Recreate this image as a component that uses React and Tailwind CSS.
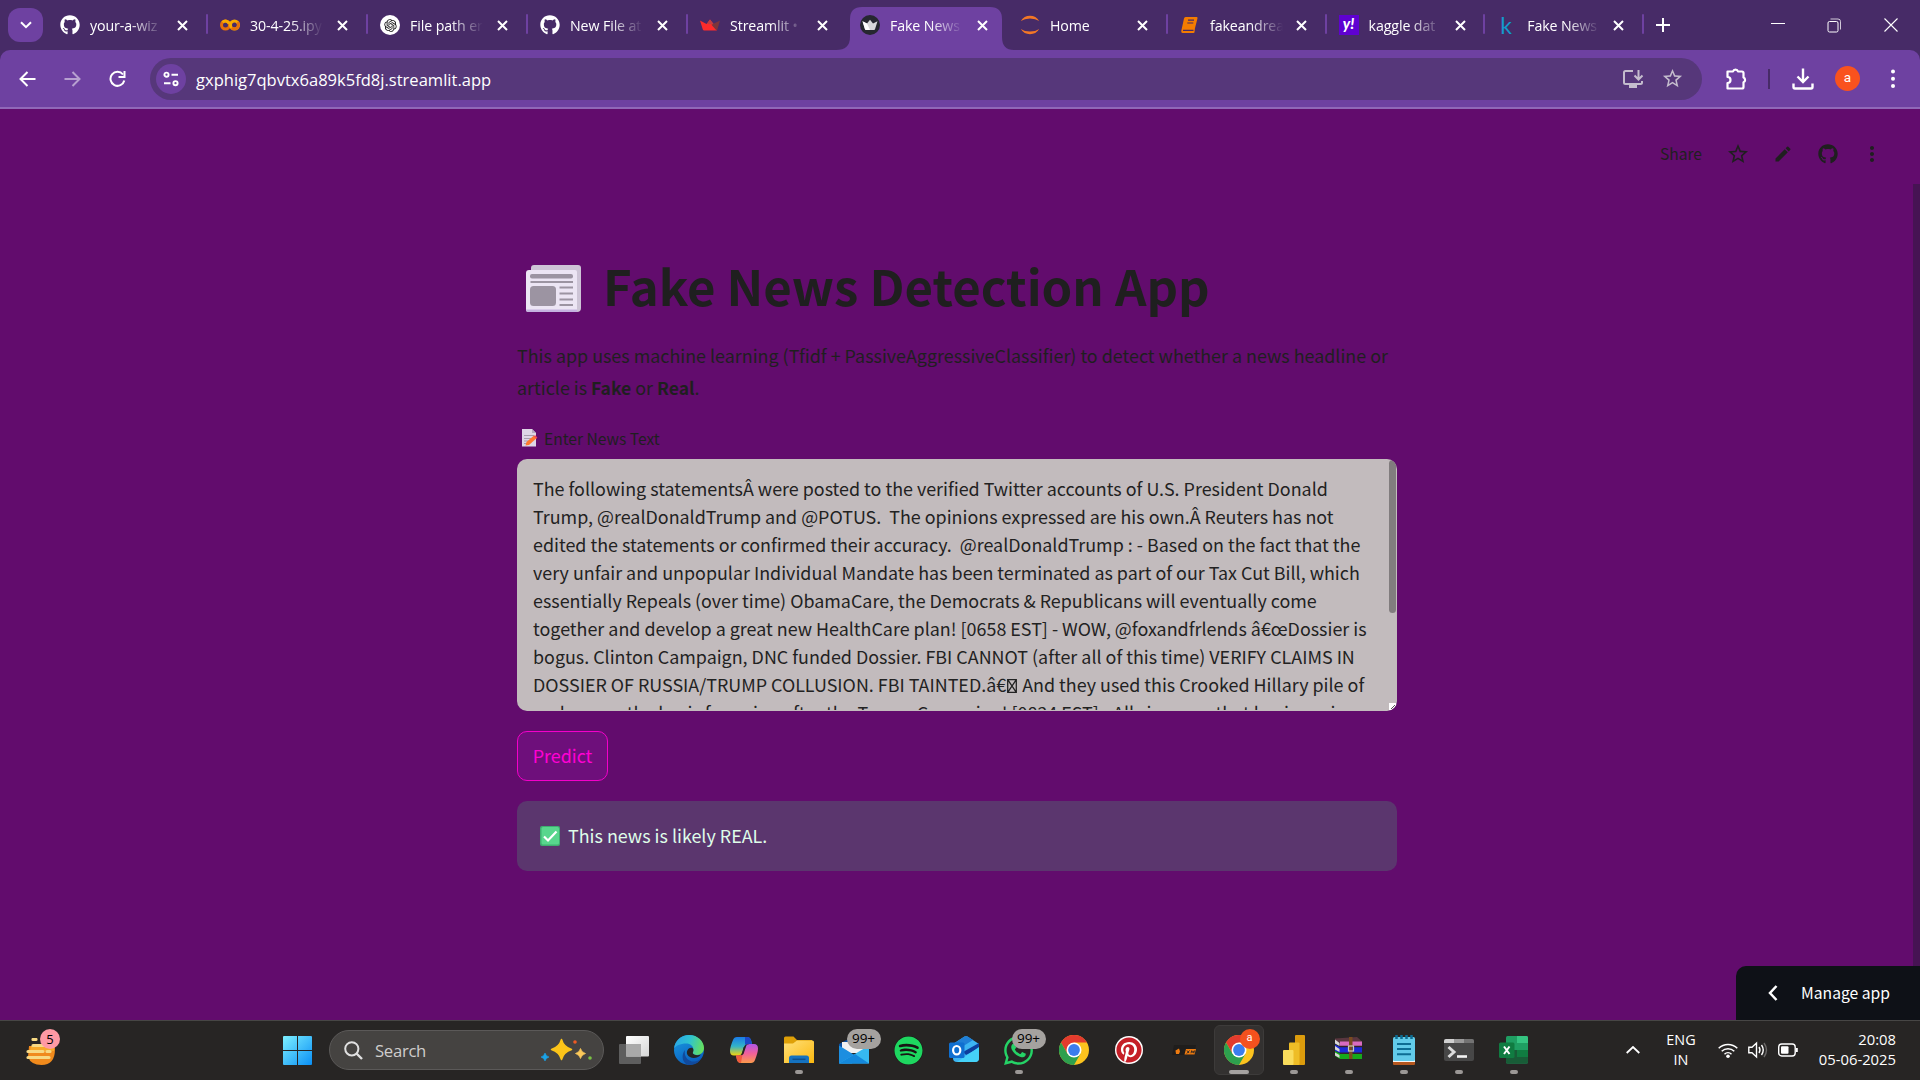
import React from "react";
import { FaGithub, FaWhatsapp, FaPinterest, FaSpotify } from "react-icons/fa";
import { RiOpenaiFill } from "react-icons/ri";
import { MdEdit, MdMoreVert, MdStarOutline } from "react-icons/md";

const GithubTab = () => <FaGithub size={20} color="#fff" />;

const ColabTab = () => (
  <svg width="20" height="20" viewBox="0 0 20 20" fill="none">
    <circle cx="5.5" cy="10" r="4" stroke="#e8710a" strokeWidth="3" />
    <path d="M2.6 7.2a4 4 0 0 1 6.6 1.6" stroke="#f9ab00" strokeWidth="3" />
    <circle cx="14.5" cy="10" r="4" stroke="#f9ab00" strokeWidth="3" />
    <path d="M17.4 7.2a4 4 0 0 1-5.7 5.6" stroke="#e8710a" strokeWidth="3" />
  </svg>
);

const GptTab = () => (
  <span className="flex h-5 w-5 items-center justify-center rounded-full bg-white">
    <RiOpenaiFill size={15} color="#111" />
  </span>
);

const StreamlitTab = () => (
  <svg width="20" height="20" viewBox="0 0 20 20">
    <path d="M0 5.5 6.5 9 10 4.5 13.5 9 17 15.5H4.2Q3.2 15.5 2.8 14.6Z" fill="#ff2b2b" />
    <path d="M10 4.5 13.7 9.3 7 9z" fill="#bd4043" />
    <path d="M20 5.5 11.5 9.8l5 5.6q.7-.2.9-.9z" fill="#7d353b" />
  </svg>
);

const CrownTab = () => (
  <span className="flex h-5 w-5 items-center justify-center rounded-full bg-[#262730]">
    <svg width="16" height="12" viewBox="0 0 16 12">
      <path d="M.5 2.2 5 4.6 8 .8l3 3.8 4.500-2.400L13 10.300q-.2.700-1 .700H4q-.8 0-1-.700z" fill="#d8d8da" />
      <path d="M5 4.600 8 11H4q-.8 0-1-.700L.500 2.200z" fill="#fff" />
    </svg>
  </span>
);

const JupyterTab = () => (
  <svg width="20" height="20" viewBox="0 0 20 20" fill="#f37726">
    <path d="M.8 6Q4 .8 10 .8T19.200 6Q15.500 3.500 10 3.500T.8 6z" />
    <path d="M.8 14Q4 19.200 10 19.200T19.200 14Q15.500 16.500 10 16.500T.8 14z" />
  </svg>
);

const BookTab = () => (
  <svg width="20" height="20" viewBox="0 0 20 20">
    <path d="M5.500 2h11q1.300 0 1 1.300l-2.600 10.200-.4 3.700q-.1.800-1 .800H2.600Q1 18 1.200 16.200L4 3.500Q4.300 2 5.500 2z" fill="#f57c00" />
    <path d="M8 5.200h6M7.300 8h6M3 15.400h10.500" stroke="#472b67" strokeWidth="1.200" />
  </svg>
);

const YahooTab = () => (
  <span className="flex h-5 w-5 items-center justify-center bg-[#5f01d1] pb-[3px] font-['Lato'] text-[15px] font-black italic leading-none text-white">y!</span>
);

const KaggleTab = () => (
  <span className="flex h-5 w-5 items-center justify-center pr-[2px] font-['Lato'] text-[23px] leading-none text-[#1398cc]">k</span>
);

const TABS = [
  { title: "your-a-wiz", Icon: GithubTab, sep: true },
  { title: "30-4-25.ipy", Icon: ColabTab, sep: true },
  { title: "File path er", Icon: GptTab, sep: true },
  { title: "New File at", Icon: GithubTab, sep: true },
  { title: "Streamlit •", Icon: StreamlitTab },
  { title: "Fake News", Icon: CrownTab, active: true },
  { title: "Home", Icon: JupyterTab, sep: true },
  { title: "fakeandrea", Icon: BookTab, sep: true, narrow: true },
  { title: "kaggle dat", Icon: YahooTab, sep: true, narrow: true },
  { title: "Fake News", Icon: KaggleTab, sep: true, narrow: true },
];

const Cross = () => (
  <svg className="shrink-0" width="11" height="11" viewBox="0 0 11 11" stroke="#fff" strokeWidth="2">
    <path d="m1 1 9 9M10 1l-9 9" />
  </svg>
);

function Tab({ tab }) {
  const { Icon } = tab;
  return (
    <div className={"relative flex h-[50px] shrink-0 items-start pl-[12px] " + (tab.narrow ? "w-[158.600px]" : "w-[160px]")}>
      {tab.active && (
        <svg className="absolute -left-[12px] top-[7px]" width="178" height="43" viewBox="0 0 178 43">
          <path d="M0 43Q14 43 14 30V12Q14 0 26 0H154Q166 0 166 12V30Q166 43 178 43Z" fill="#6e41a1" />
        </svg>
      )}
      <div className="relative flex h-[50px] w-full items-center">
        <span className="flex h-5 w-5 shrink-0 items-center">
          <Icon />
        </span>
        <span className="ml-[10px] mt-[1px] w-[73px] shrink-0 whitespace-nowrap text-[14.200px] leading-5 tracking-[-0.100px] text-white [mask-image:linear-gradient(90deg,#000_55%,transparent)]">
          {tab.title}
        </span>
        <span className={"flex " + (tab.narrow ? "ml-[13px]" : "ml-[14px]")}>
          <Cross />
        </span>
        {tab.sep && <span className="absolute right-0 top-[14px] h-5 w-[2px] rounded bg-[#6e41a1]" />}
      </div>
    </div>
  );
}

function TabStrip() {
  return (
    <div className="flex h-[50px] items-center bg-[#472b67]">
      <button className="ml-2 flex h-[34px] w-[35px] shrink-0 items-center justify-center rounded-[12px] bg-[#6e41a1]">
        <svg width="12" height="8" viewBox="0 0 12 8" fill="none" stroke="#fff" strokeWidth="2">
          <path d="m1 1.200 5 5 5-5" />
        </svg>
      </button>
      <div className="ml-[5px] flex">
        {TABS.map((t, i) => (
          <Tab key={i} tab={t} />
        ))}
      </div>
      <svg className="ml-[12px]" width="14" height="14" viewBox="0 0 14 14" stroke="#fff" strokeWidth="2">
        <path d="M7 0v14M0 7h14" />
      </svg>
      <div className="ml-auto mr-[22px] flex items-center gap-[42px]">
        <svg width="14" height="14" viewBox="0 0 14 14" stroke="#fff">
          <path d="M0 5.500h14" />
        </svg>
        <svg width="15" height="15" viewBox="0 0 15 15" stroke="#fff" fill="none">
          <rect x="1" y="3.500" width="10" height="10.500" rx="1.500" />
          <path d="M3.500 1h7.500q2.500 0 2.500 2.500v8" strokeOpacity=".75" />
        </svg>
        <svg width="14" height="14" viewBox="0 0 14 14" stroke="#fff" strokeWidth="1.100">
          <path d="m.5.500 13 13M13.500.500l-13 13" />
        </svg>
      </div>
    </div>
  );
}

function Toolbar() {
  return (
    <div className="bg-[#472b67]">
      <div className="flex h-[59px] items-center rounded-t-[10px] border-b-2 border-[#9068b8] bg-[#6e41a1]">
        <svg className="ml-[19px]" width="17" height="16" viewBox="0 0 17 16" fill="none" stroke="#fff" strokeWidth="2">
          <path d="M16.500 8H1.500M8.500 1l-7 7 7 7" />
        </svg>
        <svg className="ml-[28px] opacity-50" width="17" height="16" viewBox="0 0 17 16" fill="none" stroke="#fff" strokeWidth="2">
          <path d="M.5 8h15M8.500 1l7 7-7 7" />
        </svg>
        <svg className="ml-[28px]" width="18" height="18" viewBox="0 0 18 18" fill="none" stroke="#fff" strokeWidth="2">
          <path d="M15.300 10.500A7 7 0 1 1 14 4.500" />
          <path d="M15.500 1v6h-6" />
        </svg>
        <div className="ml-[23px] flex h-[42px] w-[1552px] items-center rounded-full bg-[#56377a]">
          <span className="ml-[6px] flex h-[30px] w-[30px] items-center justify-center rounded-full bg-[#6e41a1]">
            <svg width="16" height="16" viewBox="0 0 16 16" fill="none" stroke="#fff" strokeWidth="1.900">
              <circle cx="3.500" cy="3.700" r="2.100" />
              <path d="M8.500 3.700H15M1 12.200h6.500" />
              <circle cx="12.500" cy="12.200" r="2.100" />
            </svg>
          </span>
          <span className="ml-[10px] mt-[2px] text-[16.540px] leading-6 text-white">gxphig7qbvtx6a89k5fd8j.streamlit.app</span>
          <svg className="ml-auto" width="22" height="20" viewBox="0 0 22 20" fill="none" stroke="#c4bccd" strokeWidth="2">
            <path d="M11 2H3.500Q2 2 2 3.500v10Q2 15 3.500 15h15q1.500 0 1.500-1.500V12M16.500 1v9M12.500 6.500l4 4 4-4" />
            <path d="M7 17.500h8" strokeWidth="3" />
          </svg>
          <MdStarOutline className="ml-[17px] mr-[18px]" size={23} color="#c4bccd" />
        </div>
        <svg className="ml-[22px]" width="24" height="24" viewBox="0 0 24 24" fill="none" stroke="#fff" strokeWidth="2.200" strokeLinejoin="round">
          <path d="M3.500 4.500H9a2.600 2.600 0 0 1 5 0h4q1.500 0 1.500 1.500v4.500a2.600 2.600 0 0 1 0 4.800V20q0 1.500-1.500 1.500H3.500v-5.500a3 3 0 0 0 0-6z" />
        </svg>
        <span className="ml-[20px] h-5 w-[2px] bg-[#472b67]" />
        <svg className="ml-[22px]" width="22" height="22" viewBox="0 0 22 22" fill="none" stroke="#fff" strokeWidth="2.400">
          <path d="M11 .5v13M5.500 8.500 11 14l5.500-5.500M1.500 15.500v3.500q0 1.500 1.500 1.500h16q1.500 0 1.500-1.500v-3.500" />
        </svg>
        <span className="ml-[21px] flex h-[25px] w-[25px] items-center justify-center rounded-full bg-[#f9521e] pb-[2px] font-['Roboto'] text-[13.500px] text-white">a</span>
        <svg className="ml-[30px]" width="6" height="20" viewBox="0 0 6 20" fill="#fff">
          <circle cx="3" cy="2.500" r="2" />
          <circle cx="3" cy="9.800" r="2" />
          <circle cx="3" cy="17" r="2" />
        </svg>
      </div>
    </div>
  );
}

const NewspaperEmoji = () => (
  <svg className="mt-[7px]" width="56" height="48" viewBox="0 0 56 48">
    <path d="M8 0h44q3 0 3 3v40q0 4-4 4H8Q5 47 5 44V3Q5 0 8 0z" fill="#cdc4d6" />
    <path d="M3 5h46q2 0 2 2v40H2.500Q0 47 0 44.500V8Q0 5 3 5z" fill="#ece5f4" />
    <path d="M0 44.500h51V47H2.500Q0 47 0 44.500z" fill="#c4b3e0" />
    <rect x="4" y="9" width="43" height="4.500" rx="2" fill="#9c94a2" />
    <rect x="4" y="21" width="26" height="20" rx="3.500" fill="#9c94a2" />
    <path d="M4.500 17H47M33.500 22.500H47M33.500 28.500H47M33.500 34.500H47M33.500 40H47" stroke="#9c94a2" strokeWidth="2" />
  </svg>
);

const MemoEmoji = () => (
  <svg width="16" height="18" viewBox="0 0 16 18">
    <path d="M0 0h10l4 4v13.500H0z" fill="#ded6e6" />
    <path d="M10 0v4h4z" fill="#b4aabf" />
    <path d="M2 6.500h10M2 9.500h7M2 12h5M2 14.500h3" stroke="#a69dad" />
    <path d="m3.500 16.500 1-3.500 7.500-6.500 2.500 2.800L7 16z" fill="#ff7a2e" />
    <path d="m11.500 7 1.800-.8 2 2.300-.8 1.300z" fill="#f04a58" />
  </svg>
);

const CheckEmoji = () => (
  <svg width="20" height="20" viewBox="0 0 20 20">
    <rect width="20" height="20" rx="2" fill="#3fae70" />
    <rect x="1.500" y="1" width="17.500" height="17.500" rx="1.500" fill="#58d68d" />
    <path d="m4 10.500 4 4 8.500-9" fill="none" stroke="#fff" strokeWidth="2.200" />
  </svg>
);

const Tofu = () => (
  <svg className="inline-block align-[-1px]" width="12" height="14" viewBox="0 0 12 14" fill="none" stroke="#222" strokeWidth="1.300">
    <path d="M1.700.700h8.600v12.600H1.700zM1.700.700l8.600 12.600M10.300.700 1.700 13.300" />
  </svg>
);

const LINES = [
  "The following statementsÂ were posted to the verified Twitter accounts of U.S. President Donald",
  "Trump, @realDonaldTrump and @POTUS.  The opinions expressed are his own.Â Reuters has not",
  "edited the statements or confirmed their accuracy.  @realDonaldTrump : - Based on the fact that the",
  "very unfair and unpopular Individual Mandate has been terminated as part of our Tax Cut Bill, which",
  "essentially Repeals (over time) ObamaCare, the Democrats & Republicans will eventually come",
  "together and develop a great new HealthCare plan! [0658 EST] - WOW, @foxandfrlends â€œDossier is",
  "bogus. Clinton Campaign, DNC funded Dossier. FBI CANNOT (after all of this time) VERIFY CLAIMS IN",
  <>DOSSIER OF RUSSIA/TRUMP COLLUSION. FBI TAINTED.â€<Tofu /> And they used this Crooked Hillary pile of</>,
  "garbage as the basis for going after the Trump Campaign! [0824 EST] - All signs are that business is",
];

function AppPage() {
  return (
    <main className="relative flex h-[911px] flex-col items-center bg-[#620c6d] pr-[6px] font-['Noto_Sans_CJK_SC',sans-serif] text-[#1f1f1f]">
      <header className="flex h-[90px] w-full items-center justify-end pr-[30px]">
        <span className="text-[15.600px] leading-none">Share</span>
        <MdStarOutline className="ml-[24px] mr-[1px]" size={24} />
        <MdEdit className="ml-[22px]" size={20} />
        <FaGithub className="ml-[25px]" size={20} />
        <MdMoreVert className="ml-[22px]" size={24} />
      </header>

      <div className="flex w-[880px] flex-col items-start">
        <h1 className="mt-[53px] flex h-[66px] items-center whitespace-nowrap pl-[9px] text-[49.100px] font-bold leading-[66px]">
          <NewspaperEmoji />
          <span className="-mt-[1px] ml-[21px]">Fake News Detection App</span>
        </h1>
        <p className="mt-[21px] whitespace-nowrap text-[17.900px] leading-[32px]">
          This app uses machine learning (Tfidf + PassiveAggressiveClassifier) to detect whether a news headline or
          <br />
          article is <b className="text-[17.500px]">Fake</b> or <b className="text-[17.500px]">Real</b>.
        </p>
        <label className="mt-[19px] flex h-[30px] items-center pl-[5px] text-[15.600px] leading-[30px]">
          <MemoEmoji />
          <span className="ml-[6px]">Enter News Text</span>
        </label>
        <div className="relative mt-[6px] h-[252px] w-full overflow-hidden rounded-[10px] bg-[#c2bbbd] pl-4 pt-[15px]">
          <div className="h-[236px] overflow-hidden">
            {LINES.map((l, i) => (
              <div key={i} className="h-[28px] whitespace-pre text-[17.900px] leading-[28px] text-[#222]">
                {l}
              </div>
            ))}
          </div>
          <span className="absolute right-[1px] top-[1px] h-[153px] w-[7px] rounded-full bg-[#817c7e]" />
          <svg className="absolute bottom-[1px] right-[1px]" width="7" height="7" viewBox="0 0 7 7">
            <path d="M0 0h7v3L3 7H0z" fill="#fff" />
            <path d="m2 6 4-4M4.500 6 6 4.500" stroke="#555" />
          </svg>
        </div>
        <button className="mt-[20px] flex h-[50px] w-[91px] items-center justify-center rounded-[10px] border border-[#f400ca] bg-[#6e0f7b] pb-[2px] text-[17.920px] text-[#ff00d4]">
          Predict
        </button>
        <div className="mt-[20px] flex h-[70px] w-full items-center rounded-[10px] bg-[#5b366e] pl-[23px] text-[17.920px] text-[#dffde9]">
          <CheckEmoji />
          <span className="-mt-[2px] ml-2">This news is likely REAL.</span>
        </div>
      </div>

      <span className="absolute right-0 top-[75px] h-[836px] w-[7px] bg-[#461353]" />
      <button className="absolute bottom-0 right-0 flex h-[54px] w-[184px] items-center rounded-tl-[10px] bg-[#0e1117] pl-[32px] text-[15.700px] text-white">
        <svg width="10" height="16" viewBox="0 0 10 16" fill="none" stroke="#fff" strokeWidth="2.500">
          <path d="M8.500 1 2 8l6.500 7" />
        </svg>
        <span className="ml-[23px] whitespace-nowrap">Manage app</span>
      </button>
    </main>
  );
}

const TaskView = () => (
  <svg width="30" height="30" viewBox="0 0 30 30">
    <defs>
      <linearGradient id="tv" x1="0" y1="0" x2="1" y2="1">
        <stop stopColor="#fff" />
        <stop offset="1" stopColor="#d6d6d6" />
      </linearGradient>
    </defs>
    <rect x="0" y="9" width="22" height="20" rx="1" fill="#5e5e5e" />
    <rect x="7" y="1" width="23" height="20.500" rx="1" fill="url(#tv)" />
    <path d="M7 9h15v12.500H7z" fill="#a9a9a9" />
  </svg>
);

const Edge = () => (
  <svg width="30" height="30" viewBox="0 0 30 30">
    <defs>
      <linearGradient id="e1" x1="0" y1="0.300" x2="1" y2="0.500">
        <stop stopColor="#2aa5e8" />
        <stop offset=".5" stopColor="#2fc3d0" />
        <stop offset="1" stopColor="#67e05c" />
      </linearGradient>
      <linearGradient id="e2" x1="0" y1="0" x2=".5" y2="1">
        <stop stopColor="#1b9de2" />
        <stop offset="1" stopColor="#0a5fc0" />
      </linearGradient>
    </defs>
    <circle cx="15" cy="15" r="15" fill="url(#e2)" />
    <path d="M0 13.500C1 5 8 0 15 0c9 0 15 6.500 15 13 0 4-3 7-7 7-3 0-5-1-5-2.200 0-.8 1.300-1.300 1.300-3.800 0-3-3-5.500-7-5.500C6 8.500 1.500 11 0 13.500z" fill="url(#e1)" />
    <path d="M11 15c-1.500 7 4 12.500 10 11.500 3-.5 5-2 6.500-3.500-2.500 5-7.500 7.500-13 7C8 28 7 20 11 15z" fill="#114a9c" />
    <path d="M18.500 13c2 2 .3 4 .3 5.200 1 2 5 2.500 8 1.300-2 4-11 5-13.500 0-1.500-3.500 1.500-7.500 5.200-6.500z" fill="#272524" />
  </svg>
);

const Copilot = () => (
  <svg width="28" height="27" viewBox="0 0 28 27">
    <defs>
      <linearGradient id="c1" x1="0" y1="0" x2="0" y2="1">
        <stop stopColor="#1a7be8" />
        <stop offset=".5" stopColor="#33b3c8" />
        <stop offset="1" stopColor="#f4d40c" />
      </linearGradient>
      <linearGradient id="c2" x1="0" y1="0" x2="0" y2="1">
        <stop stopColor="#b156e8" />
        <stop offset=".5" stopColor="#f0609a" />
        <stop offset="1" stopColor="#fb9a4a" />
      </linearGradient>
    </defs>
    <path d="M7 0h10q3 0 4 3l1 4h-4q-3 0-4 3l-2 6q-1 2.500-4 2.500H4Q0 18.500 0 14 0 10 3 3 4 0 7 0z" fill="url(#c1)" />
    <path d="M15 0h2q3 0 4 3l1 4h-4q-2 0-3 1z" fill="#1c48c9" />
    <path d="M21 26H11q-3 0-4-3l-1-4.500h3.500q3 0 4-3l2-6Q16.500 7 19.500 7H24q4 0 4 4.500 0 4-3 11.500-1 3-4 3z" fill="url(#c2)" />
    <path d="M6 18.500h3.500q2 0 3-1L11 26q-3 0-4-3z" fill="#f05a3c" />
    <path d="M13.500 10.500 16.500 8 13.500 17l-2 1.500z" fill="#272524" />
  </svg>
);

const Folder = () => (
  <svg width="30" height="28" viewBox="0 0 30 28">
    <defs>
      <linearGradient id="f1" x1="0" y1="0" x2="1" y2="1">
        <stop stopColor="#ffe07a" />
        <stop offset="1" stopColor="#fbb80f" />
      </linearGradient>
    </defs>
    <path d="M0 2q0-1.500 1.500-1.500H9.500L13 4H28v10H0z" fill="#dfa007" />
    <path d="M0 7.500H9L13 4.500H28.500Q30 4.500 30 6V27H0z" fill="url(#f1)" />
    <path d="M5 27v-5q0-2.500 2.500-2.500h15q2.500 0 2.500 2.500v5z" fill="#1572bf" />
    <path d="M8.500 23.300h13" stroke="#0c4f8f" strokeWidth="1.500" />
  </svg>
);

const Mail = () => (
  <svg width="30" height="28" viewBox="0 0 30 28">
    <path d="M0 8 15 0l15 8v5H0z" fill="#0a4ea0" />
    <path d="M3 6h24v11H3z" fill="#f1f1f1" />
    <path d="M0 9.500 17 20 13 27.500H0z" fill="#1c8ee0" />
    <path d="M30 9.500 0 27.500h30z" fill="#36b9f1" />
    <path d="M0 27.500 16 18l14 9.500z" fill="#1488dc" />
  </svg>
);

const Outlook = () => (
  <svg width="30" height="28" viewBox="0 0 30 28">
    <path d="M4 8 15.500.500Q17 0 18.500.500L30 8v14q0 4-4 4H8q-4 0-4-4z" fill="#3db5f2" />
    <path d="M4 8 15.500.500q1.500-.5 3 0L24 4 8 14z" fill="#1f7fd6" />
    <path d="m14 16 16-9v5L17 19z" fill="#0d3f9c" />
    <path d="M30 11v11q0 4-4 4H8z" fill="#45d2f8" />
    <rect x="0" y="6.500" width="15.500" height="15.500" rx="1.500" fill="#0f6fd0" />
    <ellipse cx="7.700" cy="14.200" rx="3.600" ry="4.200" fill="none" stroke="#fff" strokeWidth="2.200" />
  </svg>
);

const Chrome = () => (
  <svg width="30" height="30" viewBox="0 0 30 30">
    <circle cx="15" cy="15" r="15" fill="#fcc31e" />
    <path d="M2 7.500A15 15 0 0 1 28 7.500H15L8.500 18.700z" fill="#e33b2e" />
    <path d="M2 7.500A15 15 0 0 0 15 30l6.500-11.300H8.500z" fill="#2da04e" />
    <circle cx="15" cy="15" r="7.500" fill="#fff" />
    <circle cx="15" cy="15" r="5.900" fill="#3b7ded" />
  </svg>
);

const Ktm = () => (
  <svg width="26" height="12" viewBox="0 0 26 12">
    <path d="M3 1h22l-2 10H1z" fill="#1f1d1c" />
    <path d="M5 10 4.500 6.500 8 4.500 9 7.500 8 10z" fill="#ee7b10" />
    <path d="M15 5h10l-1.500 5.500H13.500z" fill="#ee7b10" />
    <path d="m16 6.500 2 2.500M18.500 6.500 15.800 9.500M20 9.200l.7-2.500 1.300 2 1.300-2-.5 2.500" stroke="#272524" strokeWidth=".9" fill="none" />
  </svg>
);

const PowerBI = () => (
  <svg width="22" height="30" viewBox="0 0 22 30">
    <rect x="12" y="0" width="10" height="30" rx="1" fill="#dc9c0c" />
    <rect x="6" y="7.500" width="10.500" height="22.500" rx="1" fill="#eebd26" />
    <rect x="0" y="15" width="10.500" height="15" rx="1" fill="#f9dc5c" />
  </svg>
);

const Winrar = () => (
  <svg className="-mt-[4px]" width="28" height="23" viewBox="0 0 28 23">
    <path d="M0 1.500 22 0l5 4.500v4.500H5L0 6z" fill="#59363f" />
    <path d="M5 4.500h22v4.500H5z" fill="#d86bc0" />
    <path d="M0 7.500 5 10v6l-5-2zM5 10h22v6H5z" fill="#1b28d8" />
    <path d="M0 14l5 2.500V22l-5-3zM5 16.500h22V22H5z" fill="#16a81a" />
    <path d="M5 9.500h22M5 16.200h22" stroke="#33202b" strokeWidth="1.400" />
    <path d="M0 2.500 4.500 6v3L0 6.500zM0 9l4.500 3v3L0 12.500zM0 15.500 4.500 18v3L0 18.500z" fill="#d8d8d8" />
    <path d="M14 0h3.500v22H14z" fill="#7a4a20" />
    <rect x="13.500" y="9" width="5" height="5" fill="none" stroke="#c9c9b8" strokeWidth="1.200" />
  </svg>
);

const Notepad = () => (
  <svg width="22" height="30" viewBox="0 0 22 30">
    <rect y="24" width="22" height="6" rx="1" fill="#b5571e" />
    <rect y="24" width="22" height="3" fill="#f6f6f6" />
    <rect y="2" width="22" height="24" rx="1.500" fill="#62cbe9" />
    <path d="M4 9h14M4 14h14M4 19.200h14" stroke="#0d6d93" strokeWidth="2" />
    <path d="M3.500 0v4M8.500 0v4M13.500 0v4M18.500 0v4" stroke="#0d6d93" strokeWidth="2.500" />
  </svg>
);

const Terminal = () => (
  <svg width="30" height="22" viewBox="0 0 30 22">
    <rect width="30" height="22" rx="2" fill="#474747" />
    <path d="M2 0h8v4H0V2q0-2 2-2z" fill="#d0d0d0" />
    <path d="M10 0h10v4H10z" fill="#9a9a9a" />
    <path d="M20 0h8q2 0 2 2v2H20z" fill="#737373" />
    <path d="m4.500 8 5.500 5-5.500 5" fill="none" stroke="#dcdcdc" strokeWidth="3" />
    <path d="M13 17.500h10" stroke="#f4f4f4" strokeWidth="2.600" />
  </svg>
);

const Excel = () => (
  <svg width="30" height="28" viewBox="0 0 30 28">
    <rect x="7" y="0" width="22" height="27.500" rx="1.500" fill="#1f9e62" />
    <path d="M18 0h9.500Q29 0 29 1.500V7H18z" fill="#35c481" />
    <path d="M7 14h11v13.500H8.500Q7 27.500 7 26z" fill="#185c37" />
    <path d="M18 14h11v7H18z" fill="#107c41" />
    <path d="M18 21h11v5q0 1.500-1.500 1.500H18z" fill="#185c37" />
    <rect x="0" y="6.500" width="15.500" height="15.500" rx="1.500" fill="#107c41" />
    <path d="m5 10.500 5.500 7.500M10.500 10.500 5 18" stroke="#fff" strokeWidth="2" />
  </svg>
);

const Pinterest = () => (
  <span className="flex h-7 w-7 items-center justify-center rounded-full bg-white">
    <FaPinterest size={26} color="#c51f27" className="shrink-0" />
  </span>
);

const Spotify = () => (
  <span className="flex h-[29px] w-[29px] items-center justify-center rounded-full bg-[#191414]">
    <FaSpotify size={29} color="#1ed760" />
  </span>
);

const APPS = [
  { Icon: TaskView },
  { Icon: Edge },
  { Icon: Copilot },
  { Icon: Folder, open: true },
  { Icon: Mail, badge: "99+" },
  { Icon: Spotify },
  { Icon: Outlook },
  { Icon: () => <FaWhatsapp size={33} color="#25d366" />, badge: "99+", open: true },
  { Icon: Chrome },
  { Icon: Pinterest },
  { Icon: Ktm },
  { Icon: Chrome, focused: true },
  { Icon: PowerBI, open: true },
  { Icon: Winrar, open: true },
  { Icon: Notepad, open: true },
  { Icon: Terminal, open: true },
  { Icon: Excel, open: true },
];

function TaskbarApp({ app }) {
  const { Icon } = app;
  return (
    <div className="flex w-[55px] justify-center">
      <div className={"relative flex h-[50px] w-[50px] items-center justify-center rounded-md " + (app.focused ? "border border-[#3d3b3a] bg-[#333130]" : "")}>
        <Icon />
        {app.badge && (
          <span className="absolute left-[18px] top-[4px] flex h-5 w-[34px] items-center justify-center rounded-full bg-[#a5a29f] text-[13.500px] leading-none text-black">{app.badge}</span>
        )}
        {app.focused && (
          <span className="absolute left-[25px] top-[3px] flex h-5 w-5 items-center justify-center rounded-full bg-[#f4511e] pb-[2px] font-['Roboto'] text-[11px] text-white">a</span>
        )}
        {app.open && <span className="absolute bottom-[1px] h-[4px] w-[8px] rounded-full bg-[#9b9896]" />}
        {app.focused && <span className="absolute bottom-0 h-[4px] w-[20px] rounded-full bg-[#a5a2a0]" />}
      </div>
    </div>
  );
}

const Star4 = ({ x, y, r, c }) => (
  <path transform={`translate(${x} ${y}) scale(${r})`} d="M0-1Q.2-.25 1 0 .2.250 0 1-.2.250-1 0-.2-.250 0-1z" fill={c} stroke={c} strokeWidth=".15" strokeLinejoin="round" />
);

function Taskbar() {
  return (
    <footer className="flex h-[60px] items-center border-t border-[#474645] bg-[#272524] pb-[1px] text-white">
      <div className="relative ml-[26px] h-[36px] w-[36px]">
        <svg className="mt-[6px]" width="30" height="27" viewBox="0 0 30 27">
          <path d="M3 8h24q2 0 2 3 0 16-13.500 16Q5 27 2 19z" fill="#f08a1c" />
          <path d="M5 8h23v5H4z" fill="#f7a92a" />
          <path d="M7 1.500h3M7 7.500h18M2 13.500h15M21 13.500h3M2 19.500h21" stroke="#f7d983" strokeWidth="3.200" strokeLinecap="round" />
        </svg>
        <span className="absolute left-[14px] top-[-3px] flex h-5 w-5 items-center justify-center rounded-full bg-[#ff99a4] text-[13px] leading-none text-black">5</span>
      </div>
      <svg className="ml-[221px]" width="29" height="29" viewBox="0 0 29 29">
        <defs>
          <linearGradient id="win" x1="0" y1="0" x2="1" y2="1">
            <stop stopColor="#7df0ff" />
            <stop offset="1" stopColor="#0a8ff5" />
          </linearGradient>
        </defs>
        <path d="M1 0h13v14H0V1q0-1 1-1zM15 0h13q1 0 1 1v13H15zM0 15h14v14H1q-1 0-1-1zM15 15h14v13q0 1-1 1H15z" fill="url(#win)" />
      </svg>
      <div className="ml-[17px] flex h-10 w-[275px] items-center rounded-full border border-[#5b5958] bg-[#454341]">
        <svg className="ml-[14px]" width="19" height="19" viewBox="0 0 19 19" fill="none" stroke="#e0e0e0" strokeWidth="2">
          <circle cx="7.800" cy="7.800" r="6.600" />
          <path d="m12.500 12.500 5.500 5.500" strokeWidth="2.400" />
        </svg>
        <span className="ml-[12px] mt-[1px] text-[16.700px] tracking-[-0.300px] text-[#cfcdcc]">Search</span>
        <svg className="ml-auto mr-[10px]" width="54" height="24" viewBox="0 0 54 24">
          <Star4 x={22.500} y={11.500} r={10} c="#fcc419" />
          <Star4 x={41.500} y={15.500} r={5} c="#fcc95a" />
          <Star4 x={6} y={19} r={4} c="#1aa3e8" />
          <circle cx="36" cy="4" r="1.800" fill="#ef5a24" />
          <circle cx="51" cy="20" r="1.800" fill="#7ac143" />
        </svg>
      </div>
      <div className="ml-[2px] flex">
        {APPS.map((a, i) => (
          <TaskbarApp key={i} app={a} />
        ))}
      </div>
      <svg className="ml-[85px]" width="14" height="8" viewBox="0 0 14 8" fill="none" stroke="#fff" strokeWidth="1.800">
        <path d="m.7 7 6.300-6 6.300 6" />
      </svg>
      <div className="ml-[24px] w-[34px] text-center text-[14.400px] leading-5">
        ENG
        <br />
        IN
      </div>
      <svg className="ml-[20px]" width="20" height="17" viewBox="0 0 20 17" fill="none" stroke="#fff" strokeWidth="1.500">
        <path d="M.7 6.300a13 13 0 0 1 18.600 0M3.700 9.300a9 9 0 0 1 12.600 0M6.500 12.200a5 5 0 0 1 7 0" />
        <circle cx="10" cy="14.300" r="1.800" fill="#fff" stroke="none" />
      </svg>
      <svg className="ml-[10px]" width="20" height="18" viewBox="0 0 20 18" fill="none" stroke="#fff" strokeWidth="1.400">
        <path d="M.8 6.200H4L8.500 2v14L4 11.800H.8zM11 6q2 3 0 6M13.500 4q3.500 5 0 10" />
        <path d="M16 2q5 7 0 14" stroke="#6b6968" />
      </svg>
      <svg className="ml-[10px]" width="20" height="14" viewBox="0 0 20 14" fill="none" stroke="#fff" strokeWidth="1.400">
        <rect x=".7" y="1" width="16.500" height="12" rx="3" />
        <rect x="3" y="3.300" width="7.500" height="7.400" rx="1" fill="#fff" stroke="none" />
        <path d="M18.800 5v4" strokeWidth="2" />
      </svg>
      <div className="-mt-[2px] ml-auto mr-[24px] text-right text-[14.800px] leading-5">
        20:08
        <br />
        05-06-2025
      </div>
    </footer>
  );
}

export default function App() {
  return (
    <div className="h-[1080px] w-[1920px] overflow-hidden font-['Open_Sans',sans-serif]">
      <TabStrip />
      <Toolbar />
      <AppPage />
      <Taskbar />
    </div>
  );
}
